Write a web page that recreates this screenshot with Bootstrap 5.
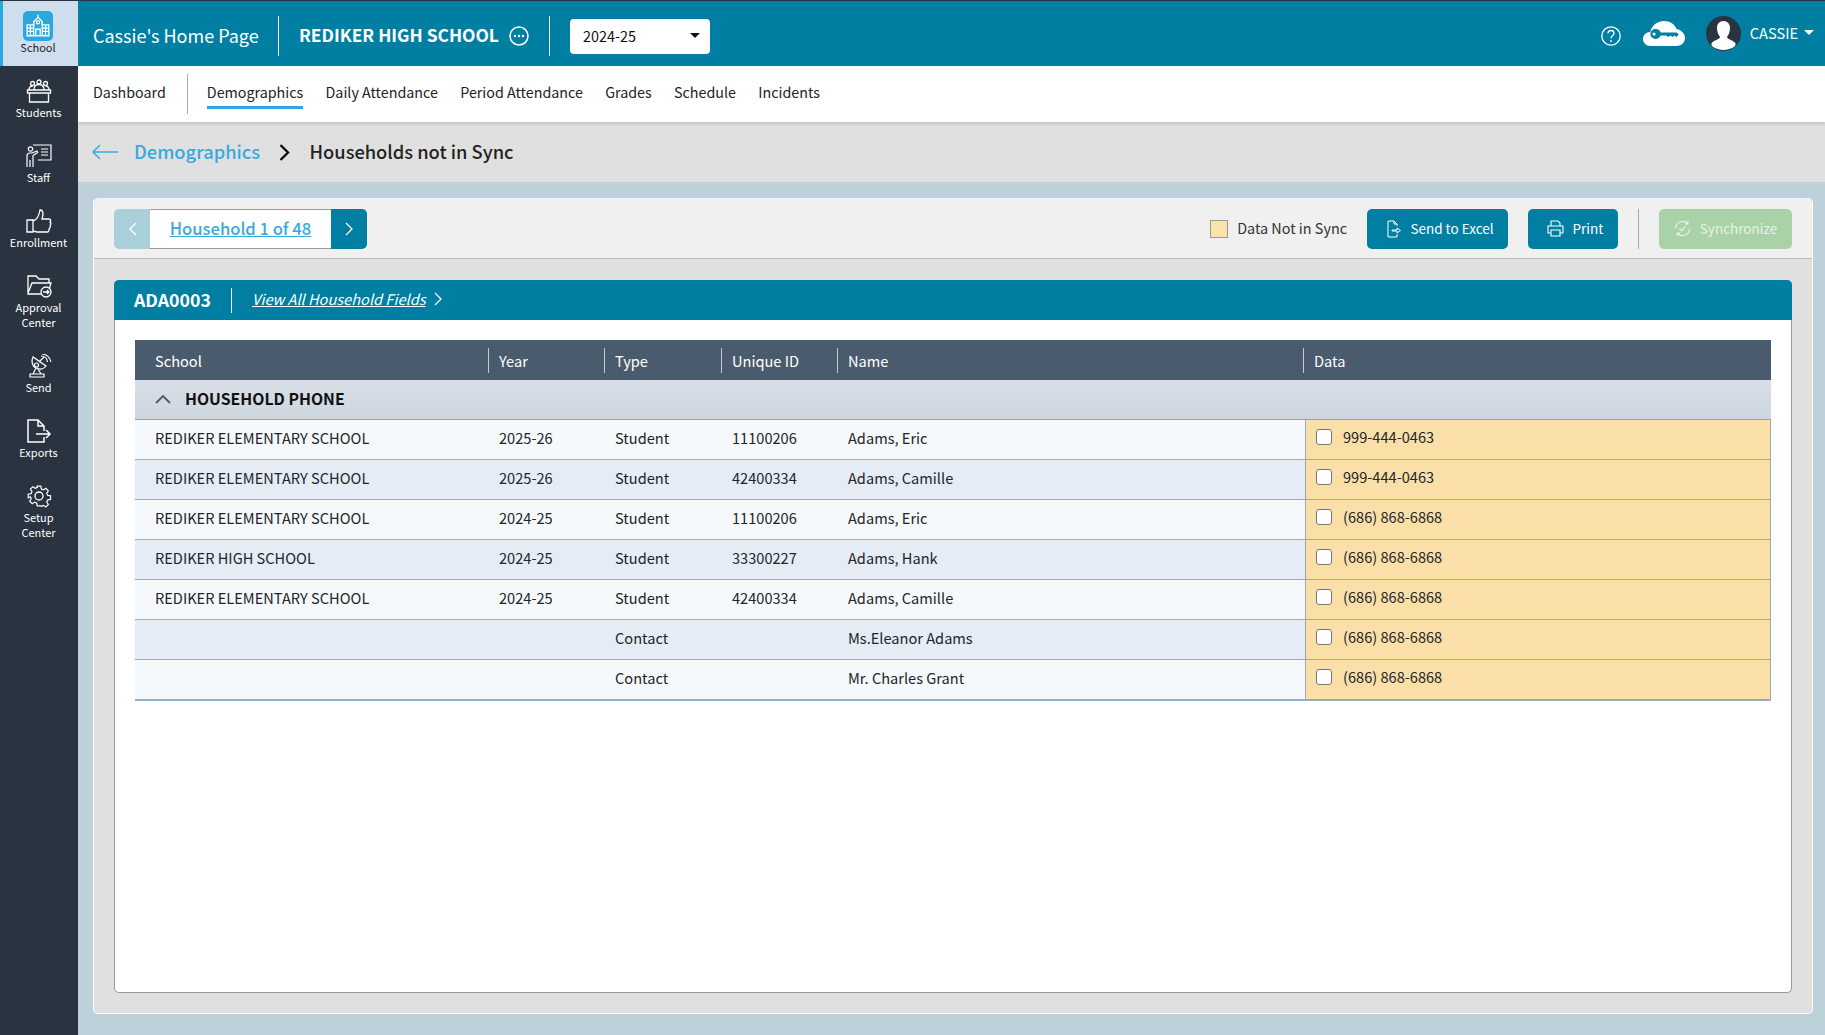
<!DOCTYPE html>
<html lang="en">
<head>
<meta charset="utf-8">
<title>Households not in Sync</title>
<link rel="stylesheet" href="https://cdn.jsdelivr.net/npm/bootstrap@5.3.0/dist/css/bootstrap.min.css">
<style>
html,body{height:100%;overflow:hidden}
body{font-family:"Noto Sans CJK SC","Noto Sans CJK JP",sans-serif;font-size:14.6px;color:#222;background:#bdd1da}
.shell{height:100vh;border-top:1px solid #2a3440}
.side{width:78px;flex:none;background:#2a3440;color:#fff}
.side-item{display:block;text-align:center;font-size:11px;line-height:15px;padding:13px 1px 11px 0;color:#fff;text-decoration:none}
.side-item svg{display:block;margin:0 auto 2px;width:26px;height:24px}
.side-active{background:#cfdeee;color:#222;border-left:3px solid #29a8df;height:65px;padding:10px 5px 0 0;line-height:13px}
.side-active .tile{display:flex;align-items:center;justify-content:center;width:30px;height:30px;margin:0 auto;background:#29a8df;border-radius:5px}
.side-active .tile svg{margin:0;width:26px;height:26px}
.topbar{height:65px;background:#007fa3;color:#fff;padding:5px 11px 0 15px}
.t-home{font-size:18px;width:185px;white-space:nowrap;margin-bottom:2px}
.t-div{width:1px;height:40px;background:#fff;flex:none}
.t-school{font-size:17.4px;font-weight:700;margin:0 10px 2px 20px;width:200px;white-space:nowrap}
.t-dots{margin-right:20px}
.t-select{width:140px;height:35px;background:#fff;color:#111;border:0;border-radius:4px;font-size:14.4px;padding:0 10px 1px 13px;margin-left:20px}
.t-select:hover,.t-select:active{background:#fff!important;color:#111!important}
.t-select::after,.t-user::after{border-top-width:5px;border-left-width:5px;border-right-width:5px;margin-left:6px}
.t-right{margin-top:-5px}
.t-help{margin-top:4px}
.t-user{font-size:14.6px;color:#fff;margin:0 0 2px 9px}
.t-cloud{margin-left:22px}
.t-ava{margin-left:21px}
.tabs{height:56px;background:#fff;padding:0 0 4px 15px;box-shadow:0 2px 3px rgba(70,110,130,.25);position:relative}
.tabs .nav-link{padding:0;color:#222;font-size:14.3px;line-height:24px}
.tab-sep{width:1px;height:40px;background:#aaa;margin:4px 19px 0 21px}
.tabs .tab-on{border-bottom:3px solid #29a8df;padding-bottom:2px;margin-bottom:-5px}
.tab-gap{gap:22.3px}
.crumb{height:60px;background:#e0e0e0;padding-left:14px;font-size:18.3px;font-weight:500}
.crumb-link{color:#39a9dc;text-decoration:none;margin:0 19px 0 16px}
.crumb-cur{margin-left:19.5px}
.panel-x{margin:16px 12px 21px 15px;background:#e0e0e0;border-radius:5px;border-right:1px solid #fff;border-bottom:1px solid #fff;border-left:1px solid #fff}
.tool{height:61px;background:#f0f0f0;border-bottom:1px solid #bbb;border-radius:5px 5px 0 0;padding:1px 20px 0}
.pager{height:40px;width:253px}
.pg-btn{width:36px;height:40px;padding:0;border:0;border-radius:0;background:#007fa3;display:flex;align-items:center;justify-content:center}
.pg-l{border-radius:5px 0 0 5px;background:#a9cfd9}
.pg-r{border-radius:0 5px 5px 0}
.pg-mid{flex:1;height:40px;background:#fff;border-top:1px solid #999;border-bottom:1px solid #999;text-align:center;line-height:37px;font-size:16.6px;font-weight:500}
.pg-mid a{color:#39a9dc}
.swatch{width:18px;height:18px;background:#fbe3a9;border:1px solid #999;margin-right:9px}
.legend{font-size:14.4px;margin:0 20px 2px 0;color:#333}
.act{height:40px;background:#007fa3;border:0;color:#fff;font-size:13.5px;border-radius:5px;display:flex;align-items:center;gap:9px;padding:0}
.act-xl{width:141px;justify-content:center;padding-left:6px}
.act-pr{width:90px;justify-content:center;margin-left:20px;padding-left:4px}
.act-sy{width:133px;justify-content:center;background:#a9d2a9;color:#e6f2e6;margin-left:20px}
.act:disabled{background:#a9d2a9;color:#e6f2e6;opacity:1}
.tool-sep{width:1px;height:40px;background:#aaa;margin-left:20px}
.body-x{padding:21px 20px 20px 20px}
.hh-card{border-radius:5px;background:#fff;border:1px solid #999;border-top:0}
.hh-head{height:40px;background:#007fa3;color:#fff;border-radius:5px 5px 0 0;margin:0 -1px;padding:0 0 2px 20px}
.hh-id{font-size:17.7px;font-weight:600;width:77px;white-space:nowrap}
.hh-sep{width:1px;height:25px;background:#fff;margin:2px 21px 0 20px}
.hh-link{color:#fff;font-style:italic;font-size:14.6px;margin-left:-1px}
.hh-body{padding:20px 20px 0 20px}
.hh-table{table-layout:fixed;width:100%;margin:0;font-size:14.6px;border-collapse:collapse}
.hh-table>*>*>*{background:transparent;box-shadow:none;color:inherit;padding:0;border:0}
.hh-table thead tr{background:#4a5b6d;color:#fff}
.hh-table thead th{font-weight:400;padding:8px 0 7px;vertical-align:middle}
.th-in{display:block;height:25px;line-height:25px;padding-left:10px;border-left:1px solid #c4ccd4}
.hh-table thead th .th-first{padding-left:20px;border-left:0}
.hh-table tr.grp td{height:39px;line-height:22px;background:linear-gradient(#d9dfe7,#cdd6e0);border-bottom:1px solid #8aa8c4;font-size:15.8px;font-weight:700;color:#111;padding:0 0 1px 20px;vertical-align:middle}
.grp-chev{margin-right:14px;vertical-align:1px}
.hh-table tbody tr.rw td{height:40px;border-bottom:1px solid #8eb0d6;vertical-align:middle;padding:0 0 3px 11px;line-height:22px}
.hh-table tbody tr.rw td:first-child{padding-left:20px}
tr.odd{background:#f5f9fc}
tr.even{background:#e5ecf6}
.hh-table tbody tr.rw td.cell-data{background:linear-gradient(90deg,transparent 2px,#9aa9b5 2px,#9aa9b5 3px,#fae0a8 3px);border-right:1px solid #9aa9b5;border-bottom-color:#9aa9b5;padding-left:13px;padding-bottom:4px}
.hh-table tbody tr.last td{border-bottom-width:2px;height:41px}
.form-check-input.cb{width:16px;height:16px;margin:0 11px 0 0;border:1px solid #777;border-radius:3px;flex:none}
</style>
</head>
<body>
<div class="shell d-flex">
  <aside class="side">
    <a class="side-item side-active" href="#">
      <span class="tile"><svg viewBox="0 0 24 24" fill="none" stroke="#fff" stroke-width="1.2"><path d="M2 21V11h6V8l4-4 4 4v3h6v10z"/><circle cx="12" cy="8.5" r="1.4"/><path d="M12 4V1.5M10 21v-6h4v6M2 14h6M2 17h6M16 14h6M16 17h6M5 11v10M19 11v10M8 8v13M16 8v13"/></svg></span>
      School
    </a>
    <a class="side-item" href="#">
      <svg viewBox="0 0 26 24" fill="none" stroke="#fff" stroke-width="1.3"><circle cx="6.5" cy="4.5" r="2"/><circle cx="13" cy="3" r="2"/><circle cx="19.5" cy="4.5" r="2"/><path d="M3 11c0-3 1.5-4 3.5-4M23 11c0-3-1.500-4-3.500-4M8 11c0-4 2-5.500 5-5.500s5 1.500 5 5.500"/><path d="M1.500 11h23v3h-23zM3.500 14v9h19v-9"/></svg>
      Students
    </a>
    <a class="side-item" href="#">
      <svg viewBox="0 0 26 24" fill="none" stroke="#fff" stroke-width="1.2"><path d="M7 1h18v15H12M15 5h7M15 8h7M15 11h7"/><circle cx="4.500" cy="5" r="2.200"/><path d="M1 23V12c0-2 1-3 3-3h2l5-2 .6 1.500L7 11.500V23M4 16v7"/></svg>
      Staff
    </a>
    <a class="side-item" href="#">
      <svg viewBox="0 0 26 24" fill="none" stroke="#fff" stroke-width="1.3"><path d="M1 11h6v12H1zM7 12c4-1 6-5 7-11 2 0 3 2 3 4 0 2-1 4-1 5h7c2 0 2 2 1 3 1 1 1 2.500 0 3.500 .6 1 .4 2.500-.8 3 .2 1.500-.7 3.500-2.200 3.500H11c-2 0-2.500-1-4-1"/></svg>
      Enrollment
    </a>
    <a class="side-item" href="#">
      <svg viewBox="0 0 26 24" fill="none" stroke="#fff" stroke-width="1.3"><path d="M15 20H2V2h8l3 3h10v4M2 19L6 9h19l-1.500 5"/><circle cx="20" cy="18" r="5"/><path d="M17 18h6M21 16l2 2-2 2"/></svg>
      Approval<br>Center
    </a>
    <a class="side-item" href="#">
      <svg viewBox="0 0 26 24" fill="none" stroke="#fff" stroke-width="1.2"><path d="M7 3c-2 4-1 9 3 11s8 1 10-2z"/><circle cx="10.500" cy="11" r="2"/><path d="M13 8l5-5M15 2c3 0 6 2 6.500 6M16 0c4 0 8 3 9 8M10 14l-3 6M12 15l3 5M4 20h14v3H4z"/></svg>
      Send
    </a>
    <a class="side-item" href="#">
      <svg viewBox="0 0 26 24" fill="none" stroke="#fff" stroke-width="1.5"><path d="M18 12V7l-6-6H2v22h16v-5M12 1v6h6M10 15h14M20 11l4 4-4 4"/></svg>
      Exports
    </a>
    <a class="side-item" href="#">
      <svg viewBox="0 0 24 24" fill="none" stroke="#fff" stroke-width="1.300"><circle cx="12" cy="12" r="4"/><path d="M10 1h4l.6 3.200 2.300 1 2.700-1.800 2.800 2.800-1.800 2.700 1 2.300 3.200.6v4l-3.200.6-1 2.300 1.800 2.700-2.800 2.800-2.700-1.800-2.300 1L14 23h-4l-.6-3.200-2.300-1-2.700 1.800-2.800-2.800 1.800-2.700-1-2.300L0 14v-4l3.200-.6 1-2.300-1.800-2.700 2.800-2.800 2.700 1.800 2.300-1z" transform="translate(1.200 1.200) scale(.9)"/></svg>
      Setup<br>Center
    </a>
  </aside>

  <div class="flex-grow-1 d-flex flex-column min-w-0">
    <header class="topbar d-flex align-items-center">
      <div class="t-home">Cassie's Home Page</div>
      <div class="t-div"></div>
      <div class="t-school">REDIKER HIGH SCHOOL</div>
      <svg width="20" height="20" viewBox="0 0 20 20" fill="none" stroke="#fff" stroke-width="1.500" class="t-dots"><circle cx="10" cy="10" r="9"/><circle cx="6" cy="10" r="1.200" fill="#fff" stroke="none"/><circle cx="10" cy="10" r="1.200" fill="#fff" stroke="none"/><circle cx="14" cy="10" r="1.200" fill="#fff" stroke="none"/></svg>
      <div class="t-div"></div>
      <button class="btn t-select dropdown-toggle d-flex align-items-center justify-content-between" type="button">2024-25</button>
      <div class="t-right ms-auto d-flex align-items-center">
        <svg width="20" height="20" viewBox="0 0 20 20" fill="none" stroke="#fff" stroke-width="1.300" class="t-help"><circle cx="10" cy="10" r="9.200"/><path d="M7 7.500C7 5.500 8.500 4.500 10 4.500S13 5.500 13 7.300c0 2.500-3 2.500-3 5"/><circle cx="10" cy="15" r=".9" fill="#fff" stroke="none"/></svg>
        <svg width="42" height="25" viewBox="0 0 40 25" preserveAspectRatio="none" class="t-cloud"><path fill="#fff" d="M7 25C3 25 0 22 0 18c0-4 3-7 7-7C8 5 13 0 20 0c6 0 10 3 12 8 5 1 8 5 8 9 0 5-4 8-8 8z"/><circle cx="12" cy="13" r="5" fill="#007fa3"/><path fill="#007fa3" d="M15 11.500h17l2 1.800-2 2.700-2-1.500-2 1.500-2-1.500-2 1.500-2-1.500h-7z"/><circle cx="10.500" cy="13" r="1.500" fill="#fff"/></svg>
        <svg width="35" height="35" viewBox="0 0 35 35" class="t-ava"><circle cx="17.500" cy="17.500" r="17.500" fill="#2a3440"/><path fill="#fff" d="M17.500 5c4 0 6.500 3 6.500 7 0 4-1.500 7-3 9 0 2 5 3 8 5.500 1 1 .7 3-.5 4-3 2.200-7 3.500-11 3.500s-8-1.300-11-3.500c-1.200-1-1.500-3-.5-4C9 24 14 23 14 21c-1.500-2-3-5-3-9 0-4 2.500-7 6.500-7z"/></svg>
        <span class="t-user dropdown-toggle">CASSIE</span>
      </div>
    </header>

    <nav class="tabs nav align-items-center flex-nowrap">
      <a class="nav-link" href="#">Dashboard</a>
      <span class="tab-sep"></span>
      <div class="d-flex tab-gap align-items-start">
        <a class="nav-link tab-on" href="#">Demographics</a>
        <a class="nav-link" href="#">Daily Attendance</a>
        <a class="nav-link" href="#">Period Attendance</a>
        <a class="nav-link" href="#">Grades</a>
        <a class="nav-link" href="#">Schedule</a>
        <a class="nav-link" href="#">Incidents</a>
      </div>
    </nav>

    <div class="crumb d-flex align-items-center">
      <svg width="26" height="16" viewBox="0 0 26 16" fill="none" stroke="#39a9dc" stroke-width="1.500"><path d="M26 8H1M8 1L1 8l7 7"/></svg>
      <a class="crumb-link" href="#">Demographics</a>
      <svg width="11" height="17" viewBox="0 0 11 17" fill="none" stroke="#111" stroke-width="2.400"><path d="M1.500 1l7.500 7.500-7.500 7.500"/></svg>
      <span class="crumb-cur">Households not in Sync</span>
    </div>

    <main class="panel-x flex-grow-1 d-flex flex-column">
      <div class="tool d-flex align-items-center">
        <div class="pager d-flex">
          <button class="btn pg-btn pg-l" type="button" aria-label="Previous"><svg width="9" height="14" viewBox="0 0 9 14" fill="none" stroke="#fff" stroke-width="1.300"><path d="M8 1L2 7l6 6"/></svg></button>
          <div class="pg-mid"><a href="#">Household 1 of 48</a></div>
          <button class="btn pg-btn pg-r" type="button" aria-label="Next"><svg width="9" height="14" viewBox="0 0 9 14" fill="none" stroke="#fff" stroke-width="1.300"><path d="M1 1l6 6-6 6"/></svg></button>
        </div>
        <div class="ms-auto d-flex align-items-center">
          <span class="swatch"></span>
          <span class="legend">Data Not in Sync</span>
          <button class="btn act act-xl" type="button"><svg width="14" height="18" viewBox="0 0 14 18" fill="none" stroke="#fff" stroke-width="1"><path d="M10 6V4L7 1H1v16h9v-3M7 1v3h3M5 10h5V8l3.500 2.500L10 13v-2H5z"/></svg>Send to Excel</button>
          <button class="btn act act-pr" type="button"><svg width="17" height="17" viewBox="0 0 17 17" fill="none" stroke="#fff" stroke-width="1.100"><path d="M4 6V1h7l2 2v3M4 13H1V6h15v7h-3M4 10h9v6H4z"/></svg>Print</button>
          <span class="tool-sep"></span>
          <button class="btn act act-sy" type="button" disabled><svg width="17" height="17" viewBox="0 0 17 17" fill="none" stroke="#e6f2e6" stroke-width="1.200"><path d="M1.500 8.500A7 7 0 0 1 13.500 3.500M15.500 8.500A7 7 0 0 1 3.500 13.500M13.800 .8v3h-3M3.200 16.200v-3h3M5.500 8.500l2.200 2.200 3.800-4.200"/></svg>Synchronize</button>
        </div>
      </div>
      <div class="body-x flex-grow-1 d-flex flex-column">
        <section class="hh-card flex-grow-1">
          <div class="hh-head d-flex align-items-center">
            <span class="hh-id">ADA0003</span>
            <span class="hh-sep"></span>
            <a class="hh-link" href="#">View All Household Fields</a>
            <svg width="9" height="14" viewBox="0 0 9 14" fill="none" stroke="#fff" stroke-width="1.300" class="ms-2"><path d="M1 1l6 6-6 6"/></svg>
          </div>
          <div class="hh-body">
            <table class="table hh-table">
              <colgroup><col style="width:353px"><col style="width:116px"><col style="width:117px"><col style="width:116px"><col style="width:466px"><col></colgroup>
              <thead>
                <tr>
                  <th><span class="th-in th-first">School</span></th>
                  <th><span class="th-in">Year</span></th>
                  <th><span class="th-in">Type</span></th>
                  <th><span class="th-in">Unique ID</span></th>
                  <th><span class="th-in">Name</span></th>
                  <th><span class="th-in">Data</span></th>
                </tr>
              </thead>
              <tbody>
                <tr class="grp"><td colspan="6"><svg width="16" height="10" viewBox="0 0 16 10" fill="none" stroke="#4a5b6d" stroke-width="1.800" class="grp-chev"><path d="M1 9l7-7 7 7"/></svg>HOUSEHOLD PHONE</td></tr>
                <tr class="rw odd"><td>REDIKER ELEMENTARY SCHOOL</td><td>2025-26</td><td>Student</td><td>11100206</td><td>Adams, Eric</td><td class="cell-data"><div class="d-flex align-items-center"><input class="form-check-input cb" type="checkbox" aria-label="Select">999-444-0463</div></td></tr>
                <tr class="rw even"><td>REDIKER ELEMENTARY SCHOOL</td><td>2025-26</td><td>Student</td><td>42400334</td><td>Adams, Camille</td><td class="cell-data"><div class="d-flex align-items-center"><input class="form-check-input cb" type="checkbox" aria-label="Select">999-444-0463</div></td></tr>
                <tr class="rw odd"><td>REDIKER ELEMENTARY SCHOOL</td><td>2024-25</td><td>Student</td><td>11100206</td><td>Adams, Eric</td><td class="cell-data"><div class="d-flex align-items-center"><input class="form-check-input cb" type="checkbox" aria-label="Select">(686) 868-6868</div></td></tr>
                <tr class="rw even"><td>REDIKER HIGH SCHOOL</td><td>2024-25</td><td>Student</td><td>33300227</td><td>Adams, Hank</td><td class="cell-data"><div class="d-flex align-items-center"><input class="form-check-input cb" type="checkbox" aria-label="Select">(686) 868-6868</div></td></tr>
                <tr class="rw odd"><td>REDIKER ELEMENTARY SCHOOL</td><td>2024-25</td><td>Student</td><td>42400334</td><td>Adams, Camille</td><td class="cell-data"><div class="d-flex align-items-center"><input class="form-check-input cb" type="checkbox" aria-label="Select">(686) 868-6868</div></td></tr>
                <tr class="rw even"><td></td><td></td><td>Contact</td><td></td><td>Ms.Eleanor Adams</td><td class="cell-data"><div class="d-flex align-items-center"><input class="form-check-input cb" type="checkbox" aria-label="Select">(686) 868-6868</div></td></tr>
                <tr class="rw odd last"><td></td><td></td><td>Contact</td><td></td><td>Mr. Charles Grant</td><td class="cell-data"><div class="d-flex align-items-center"><input class="form-check-input cb" type="checkbox" aria-label="Select">(686) 868-6868</div></td></tr>
              </tbody>
            </table>
          </div>
        </section>
      </div>
    </main>
  </div>
</div>
<script src="https://cdn.jsdelivr.net/npm/bootstrap@5.3.0/dist/js/bootstrap.bundle.min.js"></script>
</body>
</html>
